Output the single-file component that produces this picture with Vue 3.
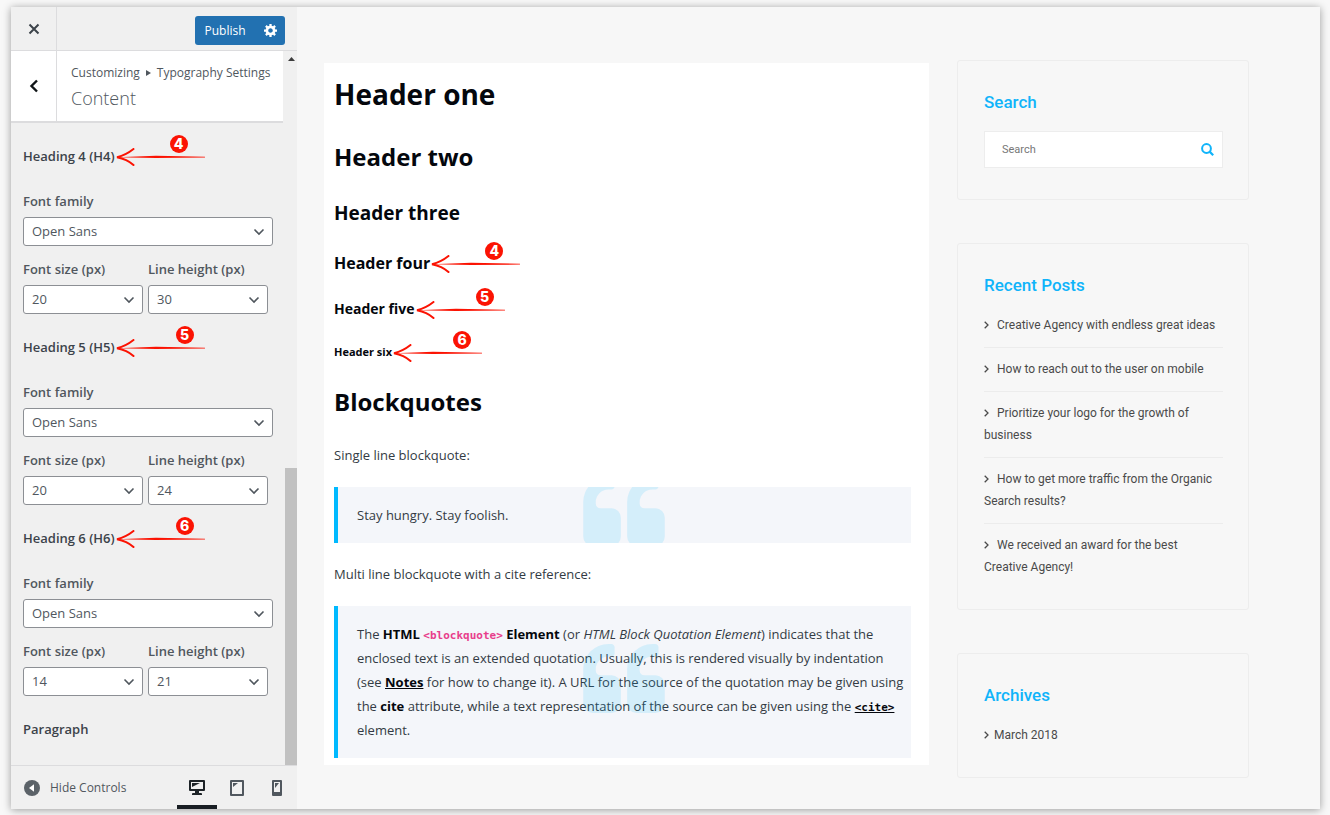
<template>
  <div class="page">
    <div class="window">
      <aside class="panel">
        <header class="panel-header">
          <button class="panel-close" aria-label="Close">
            <svg width="12" height="12" viewBox="0 0 12 12"><path d="M1.5 1.5l9 9M10.5 1.5l-9 9" stroke="#3c434a" stroke-width="2" /></svg>
          </button>
          <div class="publish-group">
            <button class="publish-btn">Publish</button>
            <button class="publish-settings" aria-label="Publish settings">
              <svg width="13" height="13" viewBox="1 2 17 17">
                <path fill="#fff" fill-rule="evenodd" d="M18 12h-2.18c-.17.7-.44 1.35-.81 1.93l1.54 1.54-2.1 2.1-1.54-1.54c-.58.36-1.23.63-1.91.79V19H8v-2.18c-.68-.16-1.33-.43-1.91-.79l-1.54 1.54-2.12-2.12 1.54-1.54c-.36-.58-.63-1.23-.79-1.91H1V9.03h2.17c.16-.7.44-1.35.8-1.94L2.43 5.55l2.1-2.1 1.54 1.54c.58-.37 1.24-.64 1.93-.81V2h3v2.18c.68.16 1.33.43 1.91.79l1.54-1.54 2.12 2.12-1.54 1.54c.36.59.64 1.24.8 1.94H18V12zm-8.5 1.5c1.66 0 3-1.34 3-3s-1.34-3-3-3-3 1.34-3 3 1.34 3 3 3z" />
              </svg>
            </button>
          </div>
        </header>

        <div class="panel-body">
          <div class="panel-content">
            <div class="section-title">
              <button class="section-back" aria-label="Back">
                <svg width="10" height="14" viewBox="0 0 10 14"><path d="M8 1.5L2.5 7 8 12.5" fill="none" stroke="#101517" stroke-width="2.4" /></svg>
              </button>
              <div class="section-text">
                <div class="breadcrumb">
                  <span>Customizing</span>
                  <svg width="5" height="6" viewBox="0 0 5 6"><path d="M0 0l5 3-5 3z" fill="#50575e" /></svg>
                  <span>Typography Settings</span>
                </div>
                <h3>Content</h3>
              </div>
            </div>

            <div class="fields">
              <section v-for="group in groups" :key="group.level" class="group">
                <h4>
                  <span class="marked">Heading {{ group.level }} (H{{ group.level }})
                    <span :class="['note', `note-${group.level}`]">
                      <svg width="90" height="18" viewBox="0 0 90 18"><path :d="arrowHead" class="arrow-head" /><path :d="arrowShaft" class="arrow-shaft" /></svg>
                      <b class="badge">{{ group.level }}</b>
                    </span>
                  </span>
                </h4>
                <label :for="`family-${group.level}`">Font family</label>
                <select :id="`family-${group.level}`" v-model="group.family">
                  <option>Open Sans</option>
                  <option>Roboto</option>
                </select>
                <div class="pair">
                  <div class="field">
                    <label :for="`size-${group.level}`">Font size (px)</label>
                    <select :id="`size-${group.level}`" v-model="group.size">
                      <option v-for="n in sizes" :key="n">{{ n }}</option>
                    </select>
                  </div>
                  <div class="field">
                    <label :for="`line-${group.level}`">Line height (px)</label>
                    <select :id="`line-${group.level}`" v-model="group.line">
                      <option v-for="n in sizes" :key="n">{{ n }}</option>
                    </select>
                  </div>
                </div>
              </section>
              <h4>Paragraph</h4>
            </div>
          </div>
          <div class="scrollbar">
            <svg width="7" height="4" viewBox="0 0 7 4"><path d="M0 4L3.5 0 7 4z" fill="#3c3c3c" /></svg>
            <div class="thumb"></div>
          </div>
        </div>

        <footer class="panel-footer">
          <button class="collapse">
            <svg width="16" height="16" viewBox="0 0 16 16"><circle cx="8" cy="8" r="8" fill="#5b6268" /><path d="M10 4.3v7.4L5 8z" fill="#fff" /></svg>
            <span>Hide Controls</span>
          </button>
          <div class="devices">
            <button class="device active" aria-label="Desktop">
              <svg width="16" height="16" viewBox="0 0 16 16">
                <path fill="#1d2327" fill-rule="evenodd" d="M1 0h14q1 0 1 1v9q0 1-1 1h-5v2h2q1 0 1 1v1H3v-1q0-1 1-1h2v-2H1q-1 0-1-1V1q0-1 1-1zM2 2v7h12V2z" />
                <path fill="#1d2327" d="M3 3h8L3 7z" />
              </svg>
            </button>
            <button class="device" aria-label="Tablet">
              <svg width="14" height="16" viewBox="0 0 14 16">
                <path fill="#50575e" fill-rule="evenodd" d="M1 0h12q1 0 1 1v14q0 1-1 1H1q-1 0-1-1V1q0-1 1-1zM2 2v12h10V2z" />
                <path fill="#50575e" d="M3 3h5L3 7z" />
              </svg>
            </button>
            <button class="device" aria-label="Mobile">
              <svg width="10" height="16" viewBox="0 0 10 16">
                <path fill="#50575e" fill-rule="evenodd" d="M1 0h8q1 0 1 1v14q0 1-1 1H1q-1 0-1-1V1q0-1 1-1zM2 2v10h6V2z" />
                <path fill="#50575e" d="M3 3h4L3 8z" />
              </svg>
            </button>
          </div>
        </footer>
      </aside>

      <main class="preview">
        <article class="content">
          <h1>Header one</h1>
          <h2>Header two</h2>
          <h3>Header three</h3>
          <component :is="`h${item.level}`" v-for="item in headers" :key="item.level">
            <span class="marked">{{ item.text }}
              <span :class="['note', `note-${item.level}`]">
                <svg width="90" height="18" viewBox="0 0 90 18"><path :d="arrowHead" class="arrow-head" /><path :d="arrowShaft" class="arrow-shaft" /></svg>
                <b class="badge">{{ item.level }}</b>
              </span>
            </span>
          </component>
          <h2>Blockquotes</h2>
          <p>Single line blockquote:</p>
          <blockquote>
            Stay hungry. Stay foolish.
            <svg class="quote-mark" viewBox="0 128 1664 1408"><path :d="quotePath" /><path :d="quotePath" transform="translate(896 0)" /></svg>
          </blockquote>
          <p>Multi line blockquote with a cite reference:</p>
          <blockquote>
            The <strong>HTML <code class="tag">&lt;blockquote&gt;</code> Element</strong> (or <em>HTML Block Quotation Element</em>) indicates that the enclosed text is an extended quotation. Usually, this is rendered visually by indentation (see <a href="#">Notes</a> for how to change it). A URL for the source of the quotation may be given using the <strong>cite</strong> attribute, while a text representation of the source can be given using the <a href="#"><code>&lt;cite&gt;</code></a> element.
            <svg class="quote-mark" viewBox="0 128 1664 1408"><path :d="quotePath" /><path :d="quotePath" transform="translate(896 0)" /></svg>
          </blockquote>
        </article>

        <aside class="widgets">
          <section class="widget">
            <h3>Search</h3>
            <form class="search" @submit.prevent>
              <input v-model="query" type="text" placeholder="Search" aria-label="Search" />
              <button aria-label="Submit search">
                <svg width="13" height="13" viewBox="0 0 13 13"><circle cx="5.5" cy="5.5" r="4.4" fill="none" stroke="#10b4fa" stroke-width="2" /><path d="M8.6 8.6l3.6 3.6" stroke="#10b4fa" stroke-width="2.2" /></svg>
              </button>
            </form>
          </section>
          <section class="widget">
            <h3>Recent Posts</h3>
            <ul class="posts">
              <li v-for="post in posts" :key="post">
                <svg class="chevron" width="5" height="8" viewBox="0 0 5 8"><path d="M.7.7L4 4 .7 7.3" /></svg><a href="#">{{ post }}</a>
              </li>
            </ul>
          </section>
          <section class="widget">
            <h3>Archives</h3>
            <ul class="archives">
              <li>
                <svg class="chevron" width="5" height="8" viewBox="0 0 5 8"><path d="M.7.7L4 4 .7 7.3" /></svg><a href="#">March 2018</a>
              </li>
            </ul>
          </section>
        </aside>
      </main>
    </div>
  </div>
</template>

<script setup>
import { ref } from 'vue'

const groups = ref([
  { level: 4, family: 'Open Sans', size: '20', line: '30' },
  { level: 5, family: 'Open Sans', size: '20', line: '24' },
  { level: 6, family: 'Open Sans', size: '14', line: '21' }
])

const sizes = ['14', '16', '18', '20', '21', '24', '30']

const headers = [
  { level: 4, text: 'Header four' },
  { level: 5, text: 'Header five' },
  { level: 6, text: 'Header six' }
]

const posts = [
  'Creative Agency with endless great ideas',
  'How to reach out to the user on mobile',
  'Prioritize your logo for the growth of business',
  'How to get more traffic from the Organic Search results?',
  'We received an award for the best Creative Agency!'
]

const query = ref('')

// shapes that are drawn more than once
const arrowHead = 'M17.5 1Q10 7 1 9.2Q11 11 17.5 17'
const arrowShaft = 'M1 9.2L40 7.8 89 8.8V9.6L40 10z'
const quotePath = 'M768 960v384q0 80-56 136t-136 56h-384q-80 0-136-56t-56-136v-704q0-104 40.5-198.5t109.5-163.5 163.5-109.5 198.5-40.5h64q26 0 45 19t19 45v128q0 26-19 45t-45 19h-64q-106 0-181 75t-75 181v32q0 40 28 68t68 28h224q80 0 136 56t56 136z'
</script>

<style>
body {
  margin: 0;
  background: #f8f8f8;
}
</style>

<style scoped>
* {
  box-sizing: border-box;
}

h1, h2, h3, h4, h5, h6, p, ul, blockquote {
  margin: 0;
  padding: 0;
}

button {
  padding: 0;
  border: none;
  background: none;
  font: inherit;
  color: inherit;
  cursor: pointer;
}

svg {
  display: block;
}

.page {
  display: flex;
  min-height: 100vh;
  padding: 7px 10px 6px 11px;
}

.window {
  display: flex;
  flex: 1;
  background: #f7f7f7;
  box-shadow: 0 1px 8px rgba(0, 0, 0, 0.38);
}

/* customizer panel */
.panel {
  display: flex;
  flex-direction: column;
  flex: 0 0 286px;
  background: #f0f0f0;
  font-family: "Open Sans", sans-serif;
  font-size: 12px;
  color: #50575e;
}

.panel-header {
  display: flex;
  align-items: center;
  justify-content: space-between;
  height: 44px;
  padding-right: 12px;
  border-bottom: 1px solid #dcdcde;
}

.panel-close {
  display: flex;
  align-items: center;
  justify-content: center;
  width: 46px;
  height: 100%;
  border-right: 1px solid #dcdcde;
}

.publish-group {
  display: flex;
  height: 29px;
  margin-top: 3px;
  border-radius: 3px;
  background: #2271b1;
  color: #fff;
  overflow: hidden;
}

.publish-btn {
  width: 60px;
}

.publish-settings {
  display: flex;
  align-items: center;
  justify-content: center;
  width: 30px;
}

.panel-body {
  display: flex;
  flex: 1;
}

.panel-content {
  flex: 1;
  min-width: 0;
}

.section-title {
  display: flex;
  height: 72px;
  margin-right: 2px;
  background: #fff;
  border-bottom: 2px solid #dcdcde;
}

.section-back {
  display: flex;
  align-items: center;
  justify-content: center;
  width: 46px;
  border-right: 1px solid #dcdcde;
}

.section-text {
  padding: 12px 0 0 14px;
}

.breadcrumb {
  display: flex;
  align-items: center;
  gap: 6px;
  line-height: 20px;
}

.section-text h3 {
  font-size: 18px;
  font-weight: 300;
  line-height: 30px;
  color: #50575e;
}

.fields {
  padding: 23px 12px 26px;
}

.fields h4 {
  font-size: 13px;
  font-weight: 600;
  line-height: 20px;
  color: #3c434a;
}

.group {
  padding-bottom: 23px;
}

.group h4 {
  margin-bottom: 25px;
}

.group label {
  display: block;
  margin-bottom: 6px;
  font-size: 13px;
  font-weight: 600;
  line-height: 20px;
  white-space: nowrap;
}

.group select {
  display: block;
  width: 100%;
  height: 29px;
  padding: 0 24px 1px 8px;
  border: 1px solid #8c8f94;
  border-radius: 3px;
  appearance: none;
  background: #fff url('data:image/svg+xml,%3Csvg xmlns="http://www.w3.org/2000/svg" viewBox="0 0 12 8"%3E%3Cpath d="M1.5 1.5L6 6l4.500-4.500" fill="none" stroke="%2350575e" stroke-width="1.600"/%3E%3C/svg%3E') no-repeat right 7px center / 12px 8px;
  font-family: inherit;
  font-size: 13px;
  color: #50575e;
}

.pair {
  display: flex;
  gap: 5px;
  margin-top: 13px;
  padding-right: 5px;
}

.field {
  flex: 1;
  min-width: 0;
}

.scrollbar {
  display: flex;
  flex-direction: column;
  align-items: center;
  justify-content: space-between;
  width: 12px;
  padding-top: 6px;
}

.thumb {
  width: 100%;
  height: 42%;
  background: #c1c1c1;
}

.panel-footer {
  display: flex;
  justify-content: space-between;
  height: 44px;
  border-top: 1px solid #dcdcde;
}

.collapse {
  display: flex;
  align-items: center;
  gap: 10px;
  padding-left: 13px;
}

.devices {
  display: flex;
}

.device {
  display: flex;
  align-items: center;
  justify-content: center;
  width: 40px;
  border-top: 4px solid transparent;
  border-bottom: 4px solid transparent;
}

.device.active {
  border-bottom-color: #191e23;
}

/* numbered arrows */
.marked {
  position: relative;
}

.note {
  position: absolute;
  left: 100%;
  top: 50%;
  width: 90px;
  height: 18px;
  margin: -8px 0 0 1px;
}

.arrow-head {
  fill: none;
  stroke: #fb1303;
  stroke-width: 2;
  stroke-linecap: round;
}

.arrow-shaft {
  fill: #fb1303;
}

.badge {
  position: absolute;
  top: -13px;
  left: 60px;
  width: 18px;
  height: 18px;
  border-radius: 50%;
  background: #fb1303;
  font-family: Inter, sans-serif;
  font-size: 14px;
  font-weight: 800;
  line-height: 18px;
  text-align: center;
  color: #fff;
}

.note-4 .badge {
  left: 54px;
}

/* site preview */
.preview {
  display: grid;
  grid-template-columns: 605fr 292fr;
  flex: 1;
  align-items: start;
  gap: 28px;
  min-width: 0;
  padding: 53px 71px 31px 27px;
}

.content {
  min-width: 0;
  margin-top: 3px;
  padding: 10px 18px 7px 10px;
  background: #fff;
  font-family: "Open Sans", sans-serif;
  font-size: 13px;
  line-height: 24px;
  color: #333b44;
}

.content h1,
.content h2,
.content h3,
.content h4,
.content h5,
.content h6 {
  margin-bottom: 23px;
  font-weight: 700;
  color: #04070d;
}

.content h1 {
  margin-bottom: 24px;
  font-size: 28px;
  line-height: 42px;
}

.content h2 {
  font-size: 24px;
  line-height: 36px;
}

.content h3 {
  font-size: 19px;
  line-height: 30px;
}

.content h4 {
  font-size: 16px;
  line-height: 24px;
}

.content h5 {
  font-size: 14px;
  line-height: 22px;
}

.content h6 {
  font-size: 11px;
  line-height: 18px;
}

.content p {
  margin-bottom: 20px;
}

blockquote {
  position: relative;
  padding: 16px 5px 16px 19px;
  border-left: 4px solid #00b9ff;
  background: #f4f6fa;
  overflow: hidden;
}

blockquote + p {
  margin-top: 19px;
}

blockquote strong,
blockquote a {
  font-weight: 700;
  color: #04070d;
}

code {
  font-family: "DejaVu Sans Mono", monospace;
  font-size: 11px;
  line-height: 1;
}

.tag {
  color: #e83e8c;
}

.quote-mark {
  position: absolute;
  top: 50%;
  left: 50%;
  width: 82px;
  height: 69px;
  margin: -38px 0 0 -42px;
  fill: rgba(0, 185, 255, 0.13);
  pointer-events: none;
}

.widgets {
  display: flex;
  flex-direction: column;
  gap: 43px;
  min-width: 0;
  font-family: Roboto, sans-serif;
  font-size: 12px;
  line-height: 22px;
  color: #4a4a4a;
}

.widget {
  padding: 29px 25px 31px 26px;
  border: 1px solid #ededed;
  border-radius: 3px;
}

.widget h3 {
  margin-bottom: 17px;
  font-size: 17px;
  font-weight: 500;
  line-height: 24px;
  color: #10b4fa;
}

.widget ul {
  list-style: none;
}

.widget a {
  color: inherit;
  text-decoration: none;
}

.search {
  display: flex;
  height: 37px;
  border: 1px solid #ededed;
  background: #fff;
}

.search input {
  flex: 1;
  min-width: 0;
  padding: 0 0 0 17px;
  border: none;
  outline: none;
  background: none;
  font-family: inherit;
  font-size: 11px;
  color: #777;
}

.search input::placeholder {
  color: #777;
}

.search button {
  display: flex;
  align-items: center;
  justify-content: center;
  width: 29px;
}

.posts li {
  padding-bottom: 11px;
  border-bottom: 1px solid #ececec;
}

.posts li + li {
  padding-top: 10px;
}

.posts li:last-child {
  padding-bottom: 0;
  border-bottom: none;
}

.chevron {
  display: inline-block;
  margin-right: 8px;
  fill: none;
  stroke: #4a4a4a;
  stroke-width: 1.3;
}

.archives .chevron {
  margin-right: 5px;
}
</style>
